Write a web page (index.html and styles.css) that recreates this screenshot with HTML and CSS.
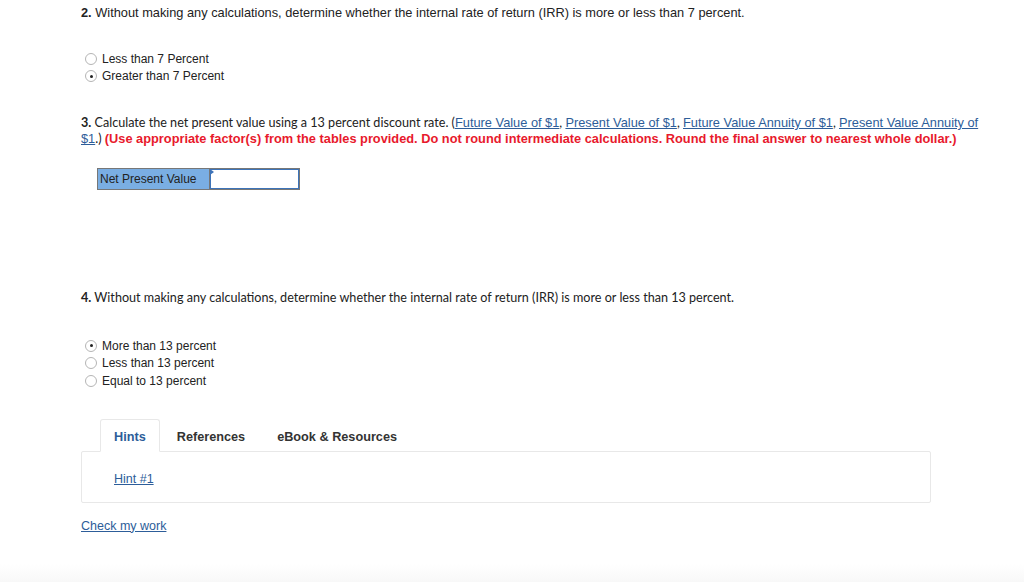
FILE: index.html
```html
<!DOCTYPE html>
<html>
<head>
<meta charset="utf-8">
<link rel="stylesheet" href="styles.css">
</head>
<body>
<div class="page">
  <section class="q q2">
    <p class="qtext arial"><b>2.</b> Without making any calculations, determine whether the internal rate of return (IRR) is more or less than 7 percent.</p>
    <ul class="opts">
      <li><span class="radio"></span>Less than 7 Percent</li>
      <li><span class="radio on"></span>Greater than 7 Percent</li>
    </ul>
  </section>

  <section class="q q3">
    <p class="qtext prox"><b>3.</b> Calculate the net present value using a 13 percent discount rate. (<a href="#">Future Value of $1</a>, <a href="#">Present Value of $1</a>, <a href="#">Future Value Annuity of $1</a>, <a href="#">Present Value Annuity of $1</a>.) <span class="warn">(Use appropriate factor(s) from the tables provided. Do not round intermediate calculations. Round the final answer to nearest whole dollar.)</span></p>
    <div class="npv">
      <div class="npv-label">Net Present Value</div>
      <div class="npv-input"><span class="flag"></span></div>
    </div>
  </section>

  <section class="q q4">
    <p class="qtext prox"><b>4.</b> Without making any calculations, determine whether the internal rate of return (IRR) is more or less than 13 percent.</p>
    <ul class="opts">
      <li><span class="radio on"></span>More than 13 percent</li>
      <li><span class="radio"></span>Less than 13 percent</li>
      <li><span class="radio"></span>Equal to 13 percent</li>
    </ul>
  </section>

  <section class="help">
    <div class="tabs">
      <div class="tab active">Hints</div>
      <div class="tab">References</div>
      <div class="tab">eBook &amp; Resources</div>
    </div>
    <div class="panel"><a href="#">Hint #1</a></div>
    <a class="check" href="#">Check my work</a>
  </section>
</div>
<div class="footer"></div>
</body>
</html>
```

FILE: styles.css
```css
html, body { margin: 0; padding: 0; background: #fff; }
body { width: 1024px; height: 582px; position: relative; overflow: hidden; font-family: "Liberation Sans", Arial, sans-serif; color: #222; }
.page { padding: 5px 0 0 81px; }
p { margin: 0; }
a { color: #2d5d99; text-decoration: underline; }
.qtext { font-size: 12.8px; line-height: 16px; color: #222; }
.arial { font-family: "Liberation Sans", Arial, sans-serif; }
.prox { font-family: "Lato", "Liberation Sans", sans-serif; font-size: 12.6px; width: 910px; }
.prox a { font-family: "Liberation Sans", Arial, sans-serif; font-size: 12.8px; line-height: 1; }
.qtext b { font-weight: bold; }
.warn { color: #e8192c; font-weight: bold; font-family: "Liberation Sans", Arial, sans-serif; font-size: 12.8px; line-height: 1; }
.opts { list-style: none; margin: 0; padding: 0; font-size: 12px; color: #222; }
.opts li { display: flex; align-items: center; height: 17.5px; }
.radio { width: 12px; height: 12px; border: 1px solid #b5b5b5; border-radius: 50%; margin: 0 5px 0 4px; box-sizing: border-box; display: flex; align-items: center; justify-content: center; background: #fff; }
.radio.on::after { content: ""; width: 3px; height: 3px; border-radius: 50%; background: #222; }
.q2 .opts { margin-top: 29px; }
.q3 { margin-top: 30px; }
.npv { display: flex; margin: 21px 0 0 16px; height: 22px; }
.npv-label { width: 112px; background: #7aaee3; border: 1px solid #777; border-right: none; font-size: 12px; line-height: 20px; padding-left: 2px; color: #222; box-sizing: border-box; }
.npv-input { width: 91px; border: 1px solid #777; position: relative; box-sizing: border-box; box-shadow: inset 0 0 0 1px #3d73b8; }
.flag { position: absolute; left: 0; top: 0; width: 0; height: 0; border-top: 3px solid transparent; border-bottom: 3px solid transparent; border-left: 4px solid #3d73b8; }
.q4 { margin-top: 100px; }
.q4 .opts { margin-top: 31px; }
.help { margin-top: 29px; }
.tabs { display: flex; height: 33px; align-items: stretch; margin-left: 19px; position: relative; z-index: 1; }
.tab { font-weight: bold; font-size: 12.7px; color: #333; display: flex; align-items: center; padding: 3px 15px 0; margin-right: 2px; }
.tab.active { color: #2d5d99; border: 1px solid #e8e8e8; border-bottom: 1px solid #fff; border-radius: 3px 3px 0 0; background: #fff; padding: 3px 13px 0; }
.panel { width: 850px; height: 52px; border: 1px solid #e8e8e8; border-radius: 2px; box-sizing: border-box; margin-top: -1px; padding: 20px 0 0 32px; font-size: 12.5px; }
.check { display: inline-block; margin-top: 16px; font-size: 12.5px; }
.footer { position: absolute; left: 0; right: 0; bottom: 0; height: 18px; background: linear-gradient(#fff, #f8f8f8); }
```
